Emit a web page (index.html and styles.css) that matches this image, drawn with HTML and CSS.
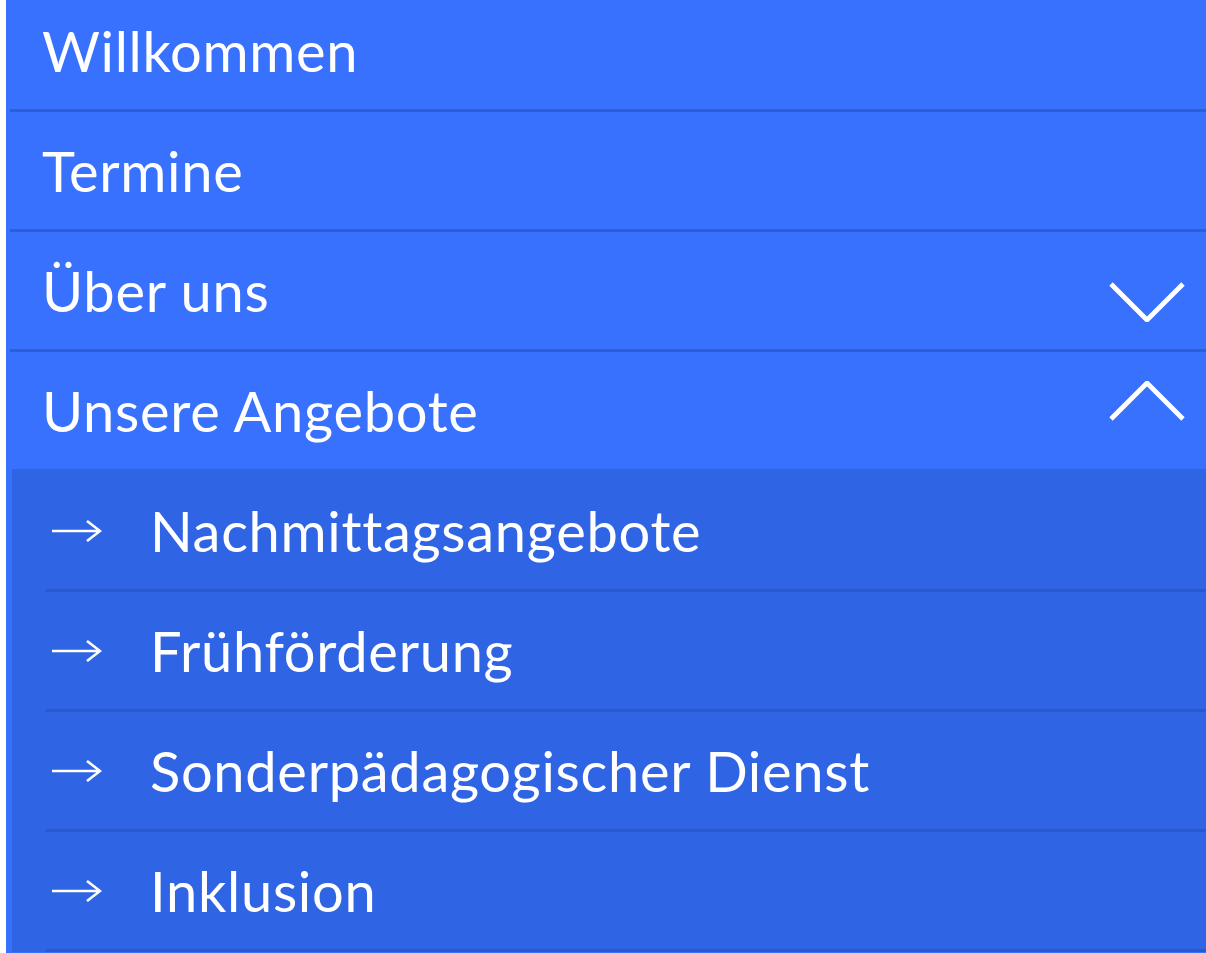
FILE: index.html
```html
<!DOCTYPE html>
<html lang="de">
<head>
<meta charset="utf-8">
<title>Menü</title>
<link rel="stylesheet" href="styles.css">
</head>
<body>
<nav class="menu">
  <ul class="menu-list">
    <li class="menu-item"><a class="menu-link" href="#">Willkommen</a></li>
    <li class="menu-item"><a class="menu-link" href="#">Termine</a></li>
    <li class="menu-item">
      <a class="menu-link" href="#">Über uns
        <svg class="chevron chevron-down" viewBox="0 0 76 40" aria-hidden="true"><polyline points="2,2 38,38 74,2"/></svg>
      </a>
    </li>
    <li class="menu-item menu-item-open">
      <a class="menu-link" href="#">Unsere Angebote
        <svg class="chevron chevron-up" viewBox="0 0 76 40" aria-hidden="true"><polyline points="2,38 38,2 74,38"/></svg>
      </a>
      <ul class="submenu">
        <li class="submenu-item"><a class="submenu-link" href="#"><svg class="arrow" viewBox="0 0 50 22" aria-hidden="true"><path d="M0 11 H48 M35 1 L48 11 L35 21"/></svg><span>Nachmittagsangebote</span></a></li>
        <li class="submenu-item"><a class="submenu-link" href="#"><svg class="arrow" viewBox="0 0 50 22" aria-hidden="true"><path d="M0 11 H48 M35 1 L48 11 L35 21"/></svg><span>Frühförderung</span></a></li>
        <li class="submenu-item"><a class="submenu-link" href="#"><svg class="arrow" viewBox="0 0 50 22" aria-hidden="true"><path d="M0 11 H48 M35 1 L48 11 L35 21"/></svg><span>Sonderpädagogischer Dienst</span></a></li>
        <li class="submenu-item"><a class="submenu-link" href="#"><svg class="arrow" viewBox="0 0 50 22" aria-hidden="true"><path d="M0 11 H48 M35 1 L48 11 L35 21"/></svg><span>Inklusion</span></a></li>
      </ul>
    </li>
  </ul>
</nav>
</body>
</html>
```

FILE: styles.css
```css
html, body {
  margin: 0;
  padding: 0;
  background: #ffffff;
  overflow: hidden;
}

.menu {
  margin: -8px 0 0 6px;
  background: #3871fe;
  font-family: "Lato", "Noto Sans", sans-serif;
  font-weight: 400;
  font-variant-ligatures: none;
  letter-spacing: 0.7px;
  color: #ffffff;
  min-height: 970px;
}

.menu-list,
.submenu {
  list-style: none;
  margin: 0;
  padding: 0;
}

.menu-link,
.submenu-link {
  color: #ffffff;
  text-decoration: none;
  display: flex;
  align-items: center;
  box-sizing: border-box;
  height: 117px;
  font-size: 56px;
  line-height: 1;
}

.menu-item {
  margin-left: 4px;
  border-bottom: 3px solid #2c5fd6;
}

.menu-item-open {
  border-bottom: 0;
}

.menu-link {
  padding: 0 21px 0 32px;
  justify-content: space-between;
}

.chevron {
  width: 76px;
  height: 40px;
  fill: none;
  stroke: #ffffff;
  stroke-width: 4.8;
}

/* closed entries point down and sit low, open ones point up and sit high */
.chevron-down {
  margin-top: 22px;
}

.chevron-up {
  margin-bottom: 19px;
}

.submenu {
  margin-left: 2px;
  padding-top: 3px;
  background: #2f64e4;
}

.submenu-item {
  margin-left: 34px;
  border-bottom: 3px solid #2a59cc;
}

.submenu-link {
  padding-left: 6px;
  gap: 48px;
}

.arrow {
  width: 50px;
  height: 22px;
  flex: none;
  fill: none;
  stroke: #ffffff;
  stroke-width: 2.6;
}
```
